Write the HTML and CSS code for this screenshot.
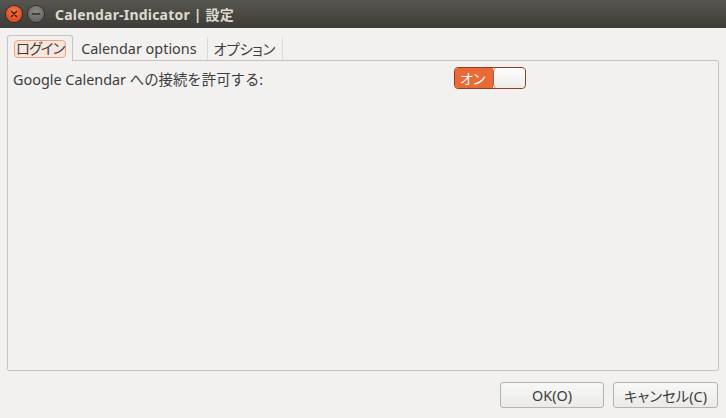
FILE: index.html
```html
<!DOCTYPE html>
<html lang="ja">
<head>
<meta charset="utf-8">
<title>Calendar-Indicator | 設定</title>
<link rel="stylesheet" href="styles.css">
</head>
<body>
<div class="window">
  <header class="titlebar">
    <div class="wbtns">
      <span class="wbtn close">
        <svg width="16" height="16" viewBox="0 0 16 16"><path d="M5.5 5.5 L10.5 10.5 M10.5 5.5 L5.5 10.5" stroke="#3a1a10" stroke-width="1.4" stroke-linecap="round"/></svg>
      </span>
      <span class="wbtn min">
        <svg width="16" height="16" viewBox="0 0 16 16"><path d="M4.5 8 H11.5" stroke="#2e2d2a" stroke-width="1.6" stroke-linecap="round"/></svg>
      </span>
    </div>
    <div class="title">Calendar-Indicator | 設定</div>
  </header>
  <main class="main">
    <nav class="tabs">
      <div class="tab active"><span class="focus">ログイン</span></div>
      <div class="tab t2">Calendar options</div>
      <div class="tab t3">オプション</div>
    </nav>
    <section class="frame">
      <div class="row">
        <span class="label">Google Calendar への接続を許可する:</span>
        <span class="switch"><span class="on">オン</span><span class="knob"></span></span>
      </div>
    </section>
  </main>
  <footer class="footer">
    <button class="btn ok">OK(O)</button>
    <button class="btn">キャンセル(C)</button>
  </footer>
</div>
</body>
</html>
```

FILE: styles.css
```css
* { box-sizing: border-box; }
html, body { margin: 0; padding: 0; }
body {
  width: 726px;
  height: 418px;
  overflow: hidden;
  background: #f2f1f0;
  font-family: "Noto Sans", "Noto Sans CJK JP", sans-serif;
  font-size: 14.4px;
  color: #3c3c3c;
}
.window {
  display: flex;
  flex-direction: column;
  height: 418px;
}
.titlebar {
  height: 28px;
  flex: none;
  display: flex;
  align-items: center;
  background: linear-gradient(#57554f, #3d3c38);
  padding-left: 6px;
}
.wbtns { display: flex; gap: 6px; }
.wbtn {
  width: 16px;
  height: 16px;
  border-radius: 50%;
  display: block;
}
.wbtn svg { display: block; }
.close {
  background: radial-gradient(circle at 50% 35%, #f7764a, #e14e1e 70%);
  box-shadow: 0 0 0 1px #3a2a22;
}
.min {
  background: radial-gradient(circle at 50% 35%, #8c8a86, #6a6864 70%);
  box-shadow: 0 0 0 1px #2f2e2b;
}
.title {
  margin-left: 11px;
  color: #dfdbd2;
  font-weight: bold;
  font-size: 14px;
  letter-spacing: 0.2px;
}
.main {
  flex: 1;
  display: flex;
  flex-direction: column;
  padding: 7px 7px 0 7px;
}
.tabs {
  display: flex;
  height: 25px;
  align-items: stretch;
  position: relative;
  z-index: 1;
  font-feature-settings: "palt";
}
.tab {
  display: flex;
  align-items: center;
  white-space: nowrap;
  border-right: 1px solid #dcdad6;
  margin-top: 2px;
  color: #3c3c3c;
}
.t2 { padding: 0 10px 0 8px; }
.t3 { padding: 0 7px 0 6px; letter-spacing: -0.4px; }
.tab.active {
  margin-top: 0;
  padding: 0 6px;
  border: 1px solid #c6c3bf;
  border-bottom: none;
  border-radius: 3px 3px 0 0;
  background: #f2f1f0;
  margin-bottom: -1px;
}
.focus {
  display: flex;
  align-items: center;
  height: 18px;
  padding: 0 1px;
  border: 1px solid #f0a081;
  border-radius: 4px;
  background: #f7e6de;
  margin-top: 1px;
  line-height: 1;
  letter-spacing: -1.1px;
}
.frame {
  flex: 1;
  border: 1px solid #c6c3bf;
  border-radius: 0 2px 2px 2px;
  padding: 6px 5px;
}
.row {
  display: grid;
  grid-template-columns: 441px 72px;
  align-items: center;
}
.switch {
  display: flex;
  height: 22px;
  border: 1px solid #8f3f20;
  border-radius: 4px;
  overflow: hidden;
  font-feature-settings: "palt";
}
.on {
  width: 38px;
  background: #ea6a35;
  color: #ffffff;
  display: flex;
  align-items: center;
  padding-left: 5px;
  font-size: 14px;
}
.knob {
  flex: 1;
  background: linear-gradient(#ffffff, #ecebe9);
  border-left: 1px solid #b06040;
  border-radius: 4px;
}
.footer {
  flex: none;
  height: 47px;
  display: flex;
  justify-content: flex-end;
  align-items: flex-start;
  gap: 9px;
  padding: 11px 8px 0 0;
}
.btn {
  width: 104px;
  height: 26px;
  border: 1px solid #b6b3ae;
  border-radius: 3px;
  background: linear-gradient(#f8f8f7, #ebeae8);
  font-family: "Noto Sans", "Noto Sans CJK JP", sans-serif;
  font-size: 14.4px;
  color: #3c3c3c;
  padding: 0;
  font-feature-settings: "palt";
}
.btn + .btn { width: 105px; }
```
